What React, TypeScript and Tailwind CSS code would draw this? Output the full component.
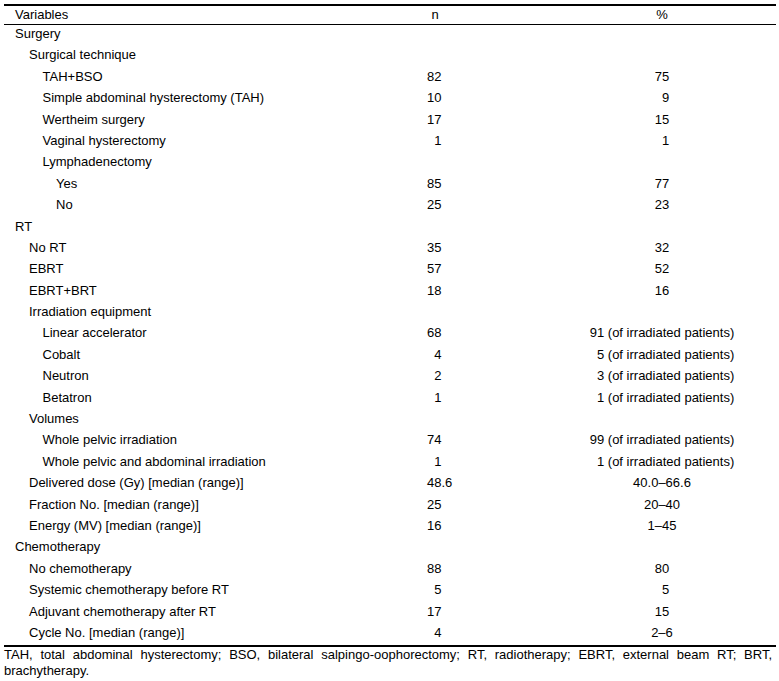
import React from "react";

type Row = { label: string; level: number; n?: string; pct?: string };

const rows: Row[] = [
  { label: "Surgery", level: 0 },
  { label: "Surgical technique", level: 1 },
  { label: "TAH+BSO", level: 2, n: "82", pct: "75" },
  { label: "Simple abdominal hysterectomy (TAH)", level: 2, n: "10", pct: "9" },
  { label: "Wertheim surgery", level: 2, n: "17", pct: "15" },
  { label: "Vaginal hysterectomy", level: 2, n: "1", pct: "1" },
  { label: "Lymphadenectomy", level: 2 },
  { label: "Yes", level: 3, n: "85", pct: "77" },
  { label: "No", level: 3, n: "25", pct: "23" },
  { label: "RT", level: 0 },
  { label: "No RT", level: 1, n: "35", pct: "32" },
  { label: "EBRT", level: 1, n: "57", pct: "52" },
  { label: "EBRT+BRT", level: 1, n: "18", pct: "16" },
  { label: "Irradiation equipment", level: 1 },
  { label: "Linear accelerator", level: 2, n: "68", pct: "91 (of irradiated patients)" },
  { label: "Cobalt", level: 2, n: "4", pct: "5 (of irradiated patients)" },
  { label: "Neutron", level: 2, n: "2", pct: "3 (of irradiated patients)" },
  { label: "Betatron", level: 2, n: "1", pct: "1 (of irradiated patients)" },
  { label: "Volumes", level: 1 },
  { label: "Whole pelvic irradiation", level: 2, n: "74", pct: "99 (of irradiated patients)" },
  { label: "Whole pelvic and abdominal irradiation", level: 2, n: "1", pct: "1 (of irradiated patients)" },
  { label: "Delivered dose (Gy) [median (range)]", level: 1, n: "48.6", pct: "40.0–66.6" },
  { label: "Fraction No. [median (range)]", level: 1, n: "25", pct: "20–40" },
  { label: "Energy (MV) [median (range)]", level: 1, n: "16", pct: "1–45" },
  { label: "Chemotherapy", level: 0 },
  { label: "No chemotherapy", level: 1, n: "88", pct: "80" },
  { label: "Systemic chemotherapy before RT", level: 1, n: "5", pct: "5" },
  { label: "Adjuvant chemotherapy after RT", level: 1, n: "17", pct: "15" },
  { label: "Cycle No. [median (range)]", level: 1, n: "4", pct: "2–6" },
];

const indent = ["pl-[11px]", "pl-[25px]", "pl-[38.5px]", "pl-[52px]"];

function Num({ v }: { v?: string }) {
  if (!v) return null;
  const pad = /^\d( |$)/.test(v);
  return (
    <span className="whitespace-pre">
      {pad && <span className="invisible">0</span>}
      {v}
    </span>
  );
}

export default function App() {
  return (
    <div
      className="w-[779px] h-[681px] bg-white text-black text-[13px]"
      style={{ fontFamily: '"Liberation Sans", Arial, sans-serif' }}
    >
      <div className="pt-[4px] pl-[4px] w-[776px]">
        <div className="border-t-2 border-black">
          <div className="grid grid-cols-[381px_100px_1fr] h-[19px] leading-[17px] border-b border-black">
            <div className="pl-[11px]">Variables</div>
            <div className="text-center">n</div>
            <div className="pl-[63px] text-center">%</div>
          </div>
          {rows.map((r, i) => (
            <div key={i} className="grid grid-cols-[381px_100px_1fr] h-[21.4px] leading-[18px]">
              <div className={indent[r.level]}>{r.label}</div>
              <div className="pl-[42px]">
                <Num v={r.n} />
              </div>
              <div className="pl-[63px] text-center">
                <Num v={r.pct} />
              </div>
            </div>
          ))}
        </div>
        <div className="border-t-2 border-black text-justify leading-[16px] pr-[4px]">
          TAH, total abdominal hysterectomy; BSO, bilateral salpingo-oophorectomy; RT, radiotherapy; EBRT, external beam RT; BRT, brachytherapy.
        </div>
      </div>
    </div>
  );
}
